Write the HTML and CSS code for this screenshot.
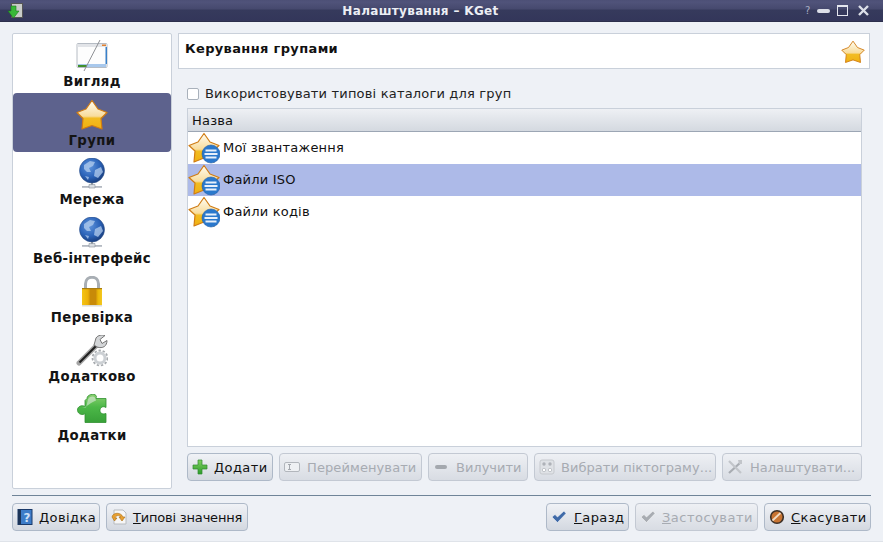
FILE: index.html
```html
<!DOCTYPE html>
<html lang="uk">
<head>
<meta charset="utf-8">
<title>Налаштування – KGet</title>
<link rel="stylesheet" href="styles.css">
</head>
<body>
<svg class="defs" width="0" height="0" aria-hidden="true">
  <defs>
    <linearGradient id="starFill" x1="0" y1="0" x2="0" y2="1">
      <stop offset="0" stop-color="#fffdf2"/><stop offset=".55" stop-color="#f8dc9c"/><stop offset=".62" stop-color="#f2bc22"/><stop offset="1" stop-color="#f0b010"/>
    </linearGradient>
    <radialGradient id="globeFill" cx=".4" cy=".35" r=".7">
      <stop offset="0" stop-color="#5f94dc"/><stop offset=".6" stop-color="#2a62b8"/><stop offset="1" stop-color="#173a78"/>
    </radialGradient>
    <linearGradient id="lockFill" x1="0" y1="0" x2="1" y2="0">
      <stop offset="0" stop-color="#f4c414"/><stop offset=".3" stop-color="#ecb008"/><stop offset=".42" stop-color="#c88a08"/><stop offset=".68" stop-color="#c88a08"/><stop offset=".8" stop-color="#ecb808"/><stop offset="1" stop-color="#f4c820"/>
    </linearGradient>
    <linearGradient id="puzzleFill" x1="0" y1="0" x2="0" y2="1">
      <stop offset="0" stop-color="#8ad070"/><stop offset=".45" stop-color="#4cb848"/><stop offset="1" stop-color="#38a038"/>
    </linearGradient>
    <linearGradient id="plusFill" x1="0" y1="0" x2="0" y2="1">
      <stop offset="0" stop-color="#80d060"/><stop offset="1" stop-color="#2c9c2c"/>
    </linearGradient>
    <symbol id="star" viewBox="0 0 32 32">
      <path d="M16 1.500 L22 10 L31 13.500 L25 19.500 L26 30 L16 26.500 L6 30 L7 19.500 L1 13.500 L10 10 Z" fill="url(#starFill)" stroke="#d07c14" stroke-width="1.200" stroke-linejoin="round"/>
    </symbol>
    <symbol id="globe" viewBox="0 0 32 32">
      <circle cx="16" cy="12.500" r="12.500" fill="url(#globeFill)" stroke="#2c4f88" stroke-width=".6"/>
      <path d="M8 7 L14 3 L19 4 L17 8 L13 10 L15 14 L11 14 L8 11 Z M19 12 L25 9 L27 14 L22 20 L18 18 Z M9 18 L13 19 L12 22 Z" fill="#b4cdee" opacity=".75"/>
      <path d="M15 25h2v3h-2z" fill="#8a929c"/>
      <path d="M6 28h20v1.800H6z" fill="#b4bac2"/>
      <path d="M13 26.500h6v3.500h-6z" fill="#d8dce0" stroke="#8a929c" stroke-width=".6"/>
    </symbol>
    <symbol id="window" viewBox="0 0 32 32">
      <rect x="1" y="3.500" width="30" height="24" rx="1" fill="#fdfdfd" stroke="#b6bcc4"/>
      <rect x="1.500" y="4" width="29" height="3" fill="#e2e4e8"/>
      <rect x="26" y="4.500" width="4" height="1.500" fill="#e08030"/>
      <rect x="2" y="24" width="28" height="3" fill="#a8c8ec"/>
      <rect x="2" y="25" width="9" height="2" fill="#40902c"/>
      <rect x="29.500" y="7" width="1.500" height="17" fill="#3a80c8"/>
      <path d="M24 0 L8 31" stroke="#8e9094" stroke-width="1" fill="none"/>
    </symbol>
    <symbol id="lock" viewBox="0 0 32 32">
      <path d="M9.500 13 V8 C9.500 -1 22.500 -1 22.500 8 V13" fill="none" stroke="#a8aeb4" stroke-width="3"/>
      <rect x="6" y="12" width="20" height="17" fill="url(#lockFill)"/>
      <rect x="6" y="12" width="20" height="1.200" fill="#a87c10"/>
      <rect x="6" y="29" width="20" height="1.500" fill="#dcdcd6"/>
    </symbol>
    <symbol id="wrench" viewBox="0 0 32 32">
      <path d="M3 28 L20 11" stroke="#a4a4a4" stroke-width="5" stroke-linecap="round"/>
      <path d="M3.500 27.500 L20 11" stroke="#202020" stroke-width="2.200"/>
      <path d="M20 3 C22 0 26 -.5 29 .5 L24 4.500 L26 8.500 L31 5.500 C31 11 27 14 21 12 L18 10 Z" fill="#d4d6d8" stroke="#6a6a6a" stroke-width=".9"/>
      <circle cx="24" cy="23" r="5" fill="none" stroke="#ccd0d4" stroke-width="3"/>
      <circle cx="24" cy="23" r="7.500" fill="none" stroke="#a8acb0" stroke-width="1.800" stroke-dasharray="2.400 1.800"/>
    </symbol>
    <symbol id="puzzle" viewBox="0 0 32 32">
      <path d="M11 4.500 C11 .5 18 -1 20 1.500 C21 2.500 20 3.500 20 4.500 H30 V13.500 C27 11.500 24 13.500 24 16.500 C24 19.500 27 20.500 30 19.500 V28.500 H9 V19.500 C7 21.500 2 20.500 1.500 16.500 C1 12.500 6 10.500 9 12.500 L9 6.500 Z" fill="url(#puzzleFill)" stroke="#309030" stroke-width=".8" stroke-linejoin="round"/>
      <path d="M6 13.500 C11 13.500 14 8.500 20 6.500 L19 3.500 C17 1.500 13 2.500 12 5.500 L10 13.500 Z" fill="#e8ece8" opacity=".55"/>
    </symbol>
    <symbol id="group" viewBox="0 0 32 32">
      <path d="M16 1.500 L22 10 L31 13.500 L25 19 L26 30 L16 26 L6 30 L7 19 L1 13.500 L10 10 Z" fill="url(#starFill)" stroke="#d07c14" stroke-width="1.200" stroke-linejoin="round"/>
      <circle cx="23" cy="22" r="9" fill="#2a78cc" stroke="#1e5ca8" stroke-width=".6"/>
      <path d="M17.500 17.500h11v2h-11zM16.500 21h13v2h-13zM17.500 24.500h11v2h-11z" fill="#e8f0fa"/>
    </symbol>
    <symbol id="plus" viewBox="0 0 16 16">
      <path d="M6 1h4v5h5v4h-5v5H6v-5H1V6h5z" fill="url(#plusFill)" stroke="#2f8a2f" stroke-width=".7"/>
    </symbol>
    <symbol id="rename" viewBox="0 0 16 16">
      <rect x=".5" y="3.500" width="15" height="9" rx="1.500" fill="#eef0f3" stroke="#b2b6bc"/>
      <path d="M4 5.500h3M4 10.500h3M5.500 5.500v5" stroke="#a4a8ae" fill="none"/>
    </symbol>
    <symbol id="minus" viewBox="0 0 16 16">
      <rect x="2" y="6" width="12" height="4" rx="2" fill="#a4a8ae"/>
    </symbol>
    <symbol id="dots" viewBox="0 0 16 16">
      <rect x="1" y="1" width="14" height="14" rx="2" fill="#dfe2e6" stroke="#c6c9ce"/>
      <circle cx="5" cy="5" r="1.700" fill="#aeb2b8"/><circle cx="11" cy="5" r="1.700" fill="#aeb2b8"/>
      <circle cx="5" cy="11" r="1.700" fill="#fff" stroke="#aeb2b8" stroke-width=".7"/><circle cx="11" cy="11" r="1.700" fill="#fff" stroke="#aeb2b8" stroke-width=".7"/>
    </symbol>
    <symbol id="tools" viewBox="0 0 16 16">
      <path d="M2 14 L14 3" stroke="#a8acb2" stroke-width="2.200"/>
      <path d="M2 2 L14 14" stroke="#c2c5ca" stroke-width="2.200"/>
      <path d="M11 1 L15 1 L15 5 L12 5 Z" fill="#c2c5ca"/>
    </symbol>
    <symbol id="check" viewBox="0 0 16 16">
      <path d="M1 8 L4 5.500 L6.500 8 L13 2 L15 4.500 L6.500 13.500 Z" fill="currentColor" stroke="#fff" stroke-width=".5"/>
    </symbol>
    <symbol id="cancel" viewBox="0 0 16 16">
      <circle cx="8" cy="8" r="6.300" fill="#c87432" stroke="#3c3028" stroke-width="1.600"/>
      <path d="M3.500 11.500 L11.500 4" stroke="#f2dcc4" stroke-width="1.800"/>
    </symbol>
    <symbol id="help" viewBox="0 0 16 16">
      <rect x="1" y="0.500" width="14" height="15" fill="#3d7cc8" stroke="#1a3a6a"/>
      <rect x="1" y="0.500" width="3" height="15" fill="#1c3458"/>
      <text x="6.500" y="12.500" class="help-mark">?</text>
    </symbol>
    <symbol id="defaults" viewBox="0 0 16 16">
      <path d="M3 1h9l3 3v11H3z" fill="#f6f6f6" stroke="#b8bcc0"/>
      <path d="M1 8 C2 3 10 3 12 8 L14 8 L11 12 L8 8 L10 8 C8 6 5 6 4 9 L6 9 L3.500 12 Z" fill="#e8a030" stroke="#a86c14" stroke-width=".6"/>
    </symbol>
    <symbol id="kget" viewBox="0 0 16 16">
      <rect x="3.500" y="0.500" width="11" height="14" fill="#c8ccc8" stroke="#555"/>
      <path d="M3 3h5v5h3L5.500 15 0 8h3z" fill="#38b838" stroke="#1a7c1a" stroke-width=".6"/>
    </symbol>
  </defs>
</svg>

<div class="window">
  <header class="titlebar">
    <svg class="title-icon"><use href="#kget"/></svg>
    <span class="title-text">Налаштування – KGet</span>
    <div class="title-controls">
      <span class="ctl-help">?</span>
      <span class="ctl-min"></span>
      <span class="ctl-max"></span>
      <svg class="ctl-close" viewBox="0 0 11 11"><path d="M1 1L10 10M10 1L1 10"/></svg>
    </div>
  </header>

  <div class="content">
    <div class="main">
      <nav class="sidebar">
        <a class="nav-item"><svg class="nav-icon"><use href="#window"/></svg><span>Вигляд</span></a>
        <a class="nav-item active"><svg class="nav-icon"><use href="#star"/></svg><span>Групи</span></a>
        <a class="nav-item"><svg class="nav-icon"><use href="#globe"/></svg><span>Мережа</span></a>
        <a class="nav-item"><svg class="nav-icon"><use href="#globe"/></svg><span>Веб-інтерфейс</span></a>
        <a class="nav-item"><svg class="nav-icon"><use href="#lock"/></svg><span>Перевірка</span></a>
        <a class="nav-item"><svg class="nav-icon"><use href="#wrench"/></svg><span>Додатково</span></a>
        <a class="nav-item"><svg class="nav-icon"><use href="#puzzle"/></svg><span>Додатки</span></a>
      </nav>

      <section class="page">
        <div class="page-header">
          <span class="page-title">Керування групами</span>
          <svg class="page-icon"><use href="#star"/></svg>
        </div>
        <div class="page-body">
          <label class="check-row"><span class="checkbox"></span>Використовувати типові каталоги для груп</label>
          <div class="list">
            <div class="list-head">Назва</div>
            <div class="list-row"><svg class="row-icon"><use href="#group"/></svg><span>Мої звантаження</span></div>
            <div class="list-row selected"><svg class="row-icon"><use href="#group"/></svg><span>Файли ISO</span></div>
            <div class="list-row"><svg class="row-icon"><use href="#group"/></svg><span>Файли кодів</span></div>
          </div>
          <div class="list-actions">
            <button class="btn w-add"><svg class="btn-icon"><use href="#plus"/></svg>Додати</button>
            <button class="btn off w-ren"><svg class="btn-icon"><use href="#rename"/></svg>Перейменувати</button>
            <button class="btn off w-del"><svg class="btn-icon"><use href="#minus"/></svg>Вилучити</button>
            <button class="btn off w-pick"><svg class="btn-icon"><use href="#dots"/></svg>Вибрати піктограму...</button>
            <button class="btn off w-cfg"><svg class="btn-icon"><use href="#tools"/></svg>Налаштувати...</button>
          </div>
        </div>
      </section>
    </div>

    <div class="separator"></div>

    <footer class="footer">
      <button class="btn w-help"><svg class="btn-icon"><use href="#help"/></svg><span><u>Д</u>овідка</span></button>
      <button class="btn w-def"><svg class="btn-icon"><use href="#defaults"/></svg><span><u>Т</u>ипові значення</span></button>
      <span class="spacer"></span>
      <button class="btn w-ok"><svg class="btn-icon ok"><use href="#check"/></svg><span><u>Г</u>аразд</span></button>
      <button class="btn off w-apply"><svg class="btn-icon muted"><use href="#check"/></svg><span><u>З</u>астосувати</span></button>
      <button class="btn w-cancel"><svg class="btn-icon"><use href="#cancel"/></svg><span><u>С</u>касувати</span></button>
    </footer>
  </div>
</div>
</body>
</html>
```

FILE: styles.css
```css
* { box-sizing: border-box; }
html, body { margin: 0; padding: 0; }
body {
  width: 883px;
  height: 542px;
  overflow: hidden;
  font-family: "DejaVu Sans", sans-serif;
  font-size: 13px;
  color: #111;
  background: #eef1f6;
}
.defs { display: block; width: 0; height: 0; }
.help-mark { font-family: "DejaVu Sans", sans-serif; font-size: 12px; font-weight: 700; fill: #cfe0f6; }

.window {
  height: 542px;
  display: flex;
  flex-direction: column;
  border-bottom: 1px solid #dfe3e9;
}

.titlebar {
  height: 22px;
  flex: none;
  display: flex;
  align-items: center;
  background: linear-gradient(#4d5076 0, #50537a 2px, #46496e 9px, #363a5c 10px, #33365a 100%);
  border-bottom: 1px solid #2c2f4c;
}
.title-icon { width: 16px; height: 16px; flex: none; margin-left: 8px; }
.title-text {
  flex: 1;
  text-align: center;
  font-weight: 700;
  font-size: 12px;
  letter-spacing: .34px;
  color: #eceef4;
  padding-left: 12px;
}
.title-controls { display: flex; align-items: center; flex: none; width: 78px; height: 21px; }
.ctl-help { color: #a8acc2; font-size: 10px; width: 12px; flex: none; }
.ctl-min { width: 13px; height: 4px; background: #dcdfe8; border-radius: 2px; flex: none; }
.ctl-max { width: 11px; height: 11px; border: 1px solid #e4e6ee; border-top-width: 2px; margin-left: 7px; flex: none; }
.ctl-close { width: 11px; height: 11px; margin-left: 10px; flex: none; fill: none; stroke: #dcdfe8; stroke-width: 2.4; }

.content { flex: 1; display: flex; flex-direction: column; padding: 11px 12px 0; min-height: 0; }
.main { display: flex; gap: 6px; height: 456px; flex: none; }

.sidebar {
  width: 160px;
  flex: none;
  background: #fff;
  border: 1px solid #c9d0da;
  border-radius: 2px;
  display: flex;
  flex-direction: column;
}
.nav-item {
  height: 59px;
  flex: none;
  display: flex;
  flex-direction: column;
  align-items: center;
  padding-top: 6px;
  font-weight: 700;
  font-size: 13.3px;
  letter-spacing: .35px;
  line-height: 16px;
  color: #141414;
}
.nav-item.active { background: #5d628d; border-radius: 4px; }
.nav-icon { width: 32px; height: 32px; flex: none; margin-bottom: 2px; }

.page { flex: 1; display: flex; flex-direction: column; min-width: 0; }
.page-header {
  height: 36px;
  flex: none;
  width: 692px;
  background: #fff;
  border: 1px solid #c9d0da;
  display: flex;
  align-items: center;
  justify-content: space-between;
  padding: 0 4px 0 6px;
}
.page-title { font-weight: 700; font-size: 13px; letter-spacing: .35px; margin-bottom: 5px; }
.page-icon { width: 24px; height: 24px; margin-top: 2px; }

.page-body { padding: 0 9px; flex: 1; display: flex; flex-direction: column; min-height: 0; }
.check-row { height: 39px; flex: none; display: flex; align-items: center; gap: 6px; font-size: 13px; letter-spacing: .18px; color: #222; padding-top: 10px; }
.checkbox { width: 12px; height: 12px; background: #fff; border: 1px solid #a9b1bb; border-radius: 2px; flex: none; }

.list {
  height: 339px;
  flex: none;
  background: #fff;
  border: 1px solid #c9d0da;
}
.list-head {
  height: 23px;
  padding: 1px 0 0 4px;
  line-height: 22px;
  letter-spacing: .2px;
  background: linear-gradient(#eef0f4, #d4d9e0);
  border-bottom: 1px solid #9ca6b4;
}
.list-row {
  height: 32px;
  display: flex;
  align-items: center;
  gap: 3px;
  letter-spacing: .2px;
}
.list-row span { margin-bottom: 2px; }
.list-row.selected { background: #adbae8; }
.row-icon { width: 32px; height: 32px; flex: none; }

.list-actions { display: flex; gap: 6px; margin-top: 6px; flex: none; }

.btn {
  height: 28px;
  flex: none;
  display: inline-flex;
  align-items: center;
  gap: 6px;
  padding: 0 0 0 4px;
  font: inherit;
  font-size: 13px;
  letter-spacing: .25px;
  color: #111;
  white-space: nowrap;
  background: linear-gradient(#f0f2f6, #d3d8e0);
  border: 1px solid #aeb9c8;
  border-radius: 4px;
}
.btn.off { color: #a7abb2; border-color: #c3c9d3; background: linear-gradient(#eef0f4, #d8dce3); }
.btn.off u { text-decoration-color: #a7abb2; }
.btn-icon { width: 16px; height: 16px; flex: none; }
.btn-icon.ok { color: #3f6aa8; }
.btn-icon.muted { color: #a8acb2; }

.w-add { width: 86px; letter-spacing: .4px; }
.w-ren { width: 143px; gap: 7px; letter-spacing: .1px; }
.w-del { width: 100px; gap: 7px; letter-spacing: 0; }
.w-pick { width: 182px; letter-spacing: .05px; }
.w-cfg { width: 140px; gap: 7px; letter-spacing: 0; }
.w-help { width: 88px; letter-spacing: .4px; }
.w-def { width: 142px; letter-spacing: -.2px; }
.w-ok { width: 83px; gap: 7px; letter-spacing: .4px; }
.w-apply { width: 123px; letter-spacing: .5px; }
.w-cancel { width: 107px; letter-spacing: .47px; }

.separator { height: 1px; background: #6f8498; margin-top: 6px; flex: none; }

.footer { display: flex; gap: 6px; margin-top: 7px; flex: none; width: 859px; }
.spacer { flex: 1; }
```
